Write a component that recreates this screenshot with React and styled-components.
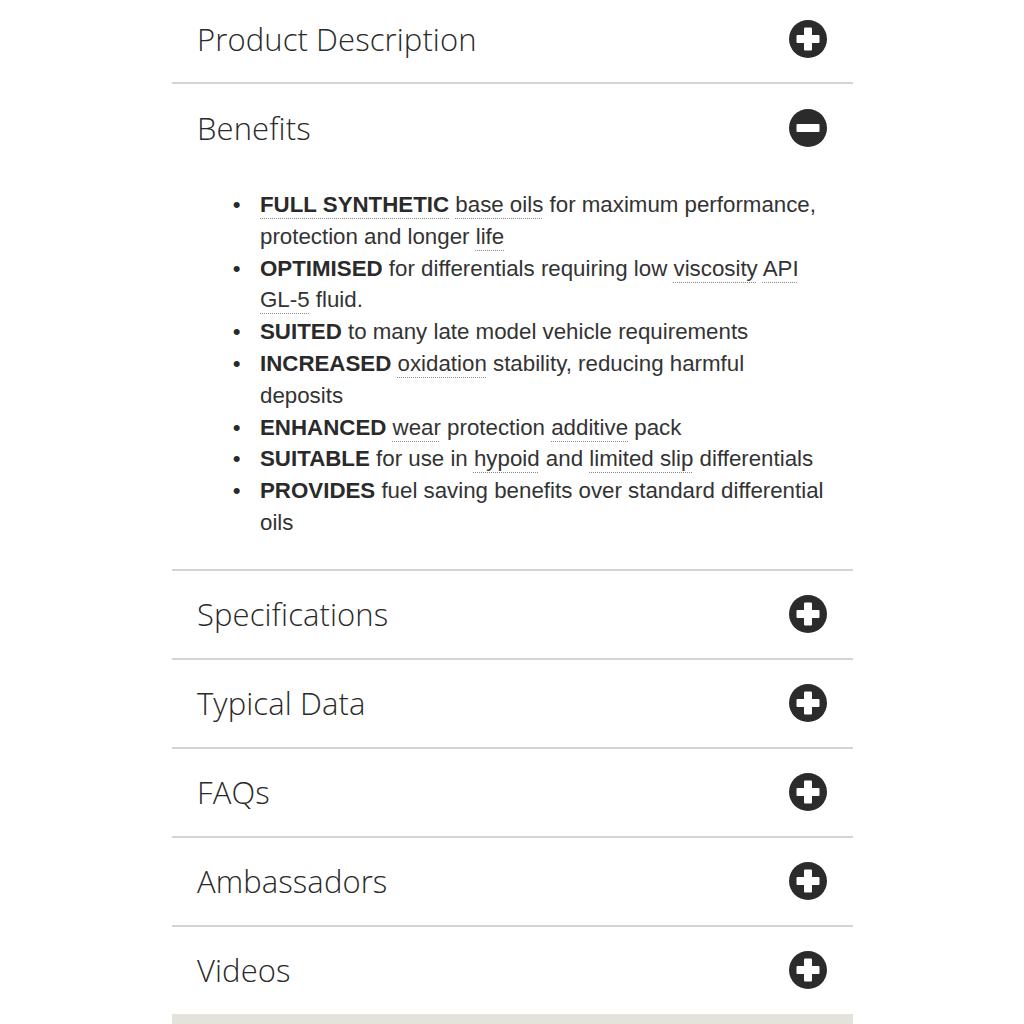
import React from "react";
import styled, { createGlobalStyle } from "styled-components";

const Global = createGlobalStyle`
  html, body { margin: 0; padding: 0; background: #ffffff; }
  body { font-family: "Liberation Sans", Arial, sans-serif; color: #333; }
`;

const Page = styled.div`
  width: 681px;
  margin: -5px auto 0 172px;
`;

const Section = styled.section`
  border-bottom: ${(p) => (p.$last ? "none" : "2px solid #d4d4d4")};
`;

const Header = styled.div`
  height: 87px;
  display: flex;
  align-items: center;
  justify-content: space-between;
  padding: 0 25px 0 25px;
`;

const Title = styled.h3`
  margin: 0;
  font-family: "Open Sans", sans-serif;
  font-weight: 300;
  font-size: 31px;
  letter-spacing: 0.1px;
  color: #2a2a2a;
`;

const Body = styled.div`
  padding: 18px 27px 30px 66px;
`;

const List = styled.ul`
  margin: 0;
  padding: 0 0 0 22px;
  font-family: "Liberation Sans", Arial, sans-serif;
  font-size: 22.3px;
  line-height: 31.8px;
  color: #333;
`;

const Item = styled.li`
  padding-left: 0;
  &::marker {
    content: "\\2022\\2002\\2009\\2006";
    color: #2a2a2a;
  }
`;

const Strong = styled.strong`
  font-weight: 700;
  color: #2a2a2a;
`;

const Term = styled.span`
  text-decoration: underline dotted #8a8a8a;
  text-decoration-thickness: 1px;
  text-underline-offset: 6px;
`;

const Footer = styled.div`
  height: 24px;
  background: #e3e3dc;
`;

const IconWrap = styled.span`
  display: inline-flex;
  width: 38px;
  height: 38px;
  margin-right: 1px;
`;

function ToggleIcon({ open }) {
  return (
    <IconWrap>
      <svg width="38" height="38" viewBox="0 0 38 38">
        <circle cx="19" cy="19" r="19" fill="#2b2b2b" />
        <rect x="7.5" y="15" width="23" height="8" rx="1" fill="#fff" />
        {!open && <rect x="15" y="7.5" width="8" height="23" rx="1" fill="#fff" />}
      </svg>
    </IconWrap>
  );
}

const sections = [
  "Product Description",
  "Benefits",
  "Specifications",
  "Typical Data",
  "FAQs",
  "Ambassadors",
  "Videos",
];

function Benefits() {
  return (
    <Body>
      <List>
        <Item>
          <Term><Strong>FULL SYNTHETIC</Strong></Term> <Term>base oils</Term> for maximum performance, protection and longer <Term>life</Term>
        </Item>
        <Item>
          <Strong>OPTIMISED</Strong> for differentials requiring low <Term>viscosity</Term> <Term>API</Term> <Term>GL-5</Term> fluid.
        </Item>
        <Item>
          <Strong>SUITED</Strong> to many late model vehicle requirements
        </Item>
        <Item>
          <Strong>INCREASED</Strong> <Term>oxidation</Term> stability, reducing harmful deposits
        </Item>
        <Item>
          <Strong>ENHANCED</Strong> <Term>wear</Term> protection <Term>additive</Term> pack
        </Item>
        <Item>
          <Strong>SUITABLE</Strong> for use in <Term>hypoid</Term> and <Term>limited slip</Term> differentials
        </Item>
        <Item>
          <Strong>PROVIDES</Strong> fuel saving benefits over standard differential oils
        </Item>
      </List>
    </Body>
  );
}

export default function App() {
  return (
    <>
      <Global />
      <Page>
        {sections.map((s, i) => {
          const open = s === "Benefits";
          return (
            <Section key={s} $last={i === sections.length - 1}>
              <Header>
                <Title>{s}</Title>
                <ToggleIcon open={open} />
              </Header>
              {open && <Benefits />}
            </Section>
          );
        })}
        <Footer />
      </Page>
    </>
  );
}
